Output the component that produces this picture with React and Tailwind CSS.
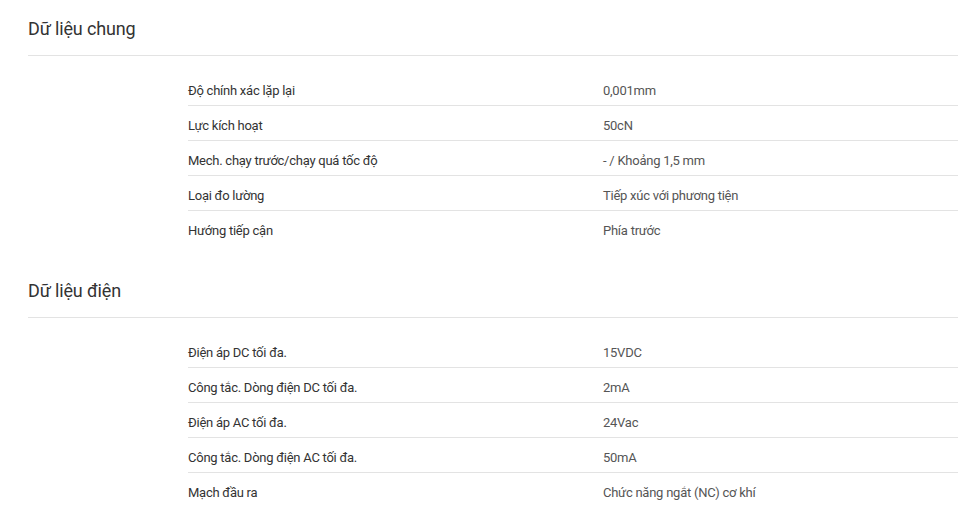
import React from 'react';

const sections = [
  {
    title: 'Dữ liệu chung',
    rows: [
      ['Độ chính xác lặp lại', '0,001mm'],
      ['Lực kích hoạt', '50cN'],
      ['Mech. chạy trước/chạy quá tốc độ', '- / Khoảng 1,5 mm'],
      ['Loại đo lường', 'Tiếp xúc với phương tiện'],
      ['Hướng tiếp cận', 'Phía trước'],
    ],
  },
  {
    title: 'Dữ liệu điện',
    rows: [
      ['Điện áp DC tối đa.', '15VDC'],
      ['Công tắc. Dòng điện DC tối đa.', '2mA'],
      ['Điện áp AC tối đa.', '24Vac'],
      ['Công tắc. Dòng điện AC tối đa.', '50mA'],
      ['Mạch đầu ra', 'Chức năng ngắt (NC) cơ khí'],
    ],
  },
];

const SpecSection = ({ title, rows }) => {
  return (
    <div className="mb-4">
      {/* Section header */}
      <div className="h-[56px] flex items-center pt-[2px] border-b border-[#e3e3e3]">
        <h2 className="text-[18px] tracking-[-0.15px] text-[#333] font-normal">{title}</h2>
      </div>

      {/* Spec rows */}
      <div className="ml-[160px] mt-[15px] divide-y divide-[#e3e3e3]">
        {rows.map(([label, value]) => (
          <div key={label} className="grid grid-cols-[415px_1fr] h-[35px] items-center text-[13px] tracking-[-0.25px]">
            <span className="text-[#333] pt-[5px]">{label}</span>
            <span className="text-[#555] pt-[5px]">{value}</span>
          </div>
        ))}
      </div>
    </div>
  );
};

const App = () => {
  return (
    <div className="w-[958px] h-[520px] bg-white pl-[28px] overflow-hidden font-['Roboto',sans-serif]">
      {sections.map((s) => (
        <SpecSection key={s.title} title={s.title} rows={s.rows} />
      ))}
    </div>
  );
};

export default App;
